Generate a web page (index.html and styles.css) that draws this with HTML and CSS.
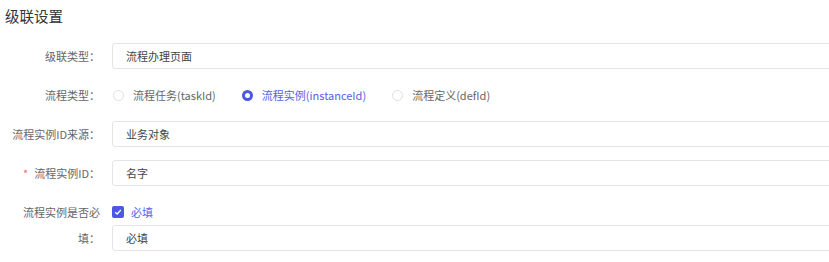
FILE: index.html
```html
<!DOCTYPE html>
<html lang="zh">
<head>
<meta charset="utf-8">
<link rel="stylesheet" href="styles.css">
</head>
<body>
<div class="panel">
  <div class="title">级联设置</div>
  <div class="form">
    <div class="item">
      <div class="label">级联类型：</div>
      <div class="control"><div class="input">流程办理页面</div></div>
    </div>
    <div class="item">
      <div class="label">流程类型：</div>
      <div class="control radios">
        <label class="radio"><span class="dot"></span><span>流程任务(taskId)</span></label>
        <label class="radio checked"><span class="dot"></span><span>流程实例(instanceId)</span></label>
        <label class="radio"><span class="dot"></span><span>流程定义(defId)</span></label>
      </div>
    </div>
    <div class="item">
      <div class="label">流程实例ID来源：</div>
      <div class="control"><div class="input">业务对象</div></div>
    </div>
    <div class="item">
      <div class="label"><span class="req">*</span>流程实例ID：</div>
      <div class="control"><div class="input">名字</div></div>
    </div>
    <div class="item">
      <div class="label">流程实例是否必填：</div>
      <div class="control stack">
        <label class="check"><span class="box"><svg width="8" height="8" viewBox="0 0 8 8"><path d="M1.2 4.2 L3.2 6 L6.8 2" fill="none" stroke="#fff" stroke-width="1.3"/></svg></span><span>必填</span></label>
        <div class="input">必填</div>
      </div>
    </div>
  </div>
</div>
</body>
</html>
```

FILE: styles.css
```css
html, body {
  margin: 0;
  padding: 0;
  background: #fff;
  overflow: hidden;
}
body {
  font-family: "Noto Sans CJK SC", "Noto Sans", sans-serif;
  color: #555;
  width: 829px;
  height: 262px;
}
.panel {
  padding: 6px 0 0 5px;
}
.title {
  font-size: 14.5px;
  line-height: 20px;
  color: #333;
  height: 20px;
}
.form {
  display: flex;
  flex-direction: column;
  gap: 13px;
  padding-top: 17px;
  padding-left: 7px;
}
.item {
  display: flex;
  align-items: flex-start;
}
.label {
  width: 88px;
  padding-right: 12px;
  flex: none;
  text-align: right;
  font-size: 11px;
  line-height: 26px;
  color: #666;
}
.req {
  color: #f56c6c;
  margin-right: 6px;
}
.control {
  flex: none;
  width: 760px;
}
.input {
  box-sizing: border-box;
  height: 26px;
  width: 760px;
  border: 1px solid #e4e4e4;
  border-radius: 3px;
  padding-left: 13px;
  font-size: 11px;
  line-height: 24px;
  color: #444;
}
.radios {
  display: flex;
  align-items: center;
  gap: 25px;
  height: 26px;
  font-size: 11px;
  color: #666;
}
.radio {
  display: flex;
  align-items: center;
  gap: 9px;
  padding-left: 1px;
}
.dot {
  box-sizing: border-box;
  width: 11px;
  height: 11px;
  border-radius: 50%;
  border: 1px solid #dcdfe6;
  background: #fff;
}
.radio.checked {
  color: #5560e6;
}
.radio.checked .dot {
  border: 3.5px solid #4b57e8;
  background: #fff;
}
.stack {
  display: flex;
  flex-direction: column;
}
.check {
  display: flex;
  align-items: center;
  gap: 7px;
  height: 26px;
  font-size: 11px;
  color: #5560e6;
}
.box {
  width: 12px;
  height: 12px;
  border-radius: 2px;
  background: #4b57e8;
  display: flex;
  align-items: center;
  justify-content: center;
}
```
